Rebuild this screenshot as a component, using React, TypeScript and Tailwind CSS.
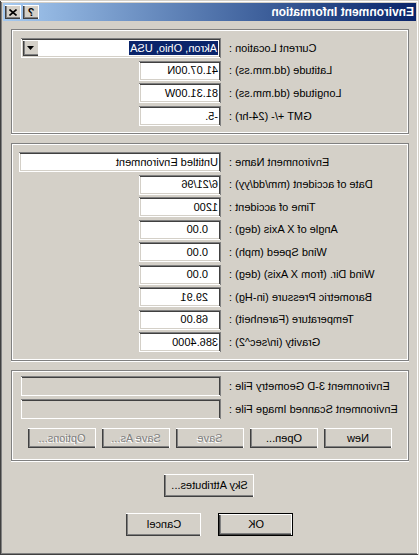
import React from 'react';

const sunken =
  'shadow-[inset_1px_1px_0_#808080,inset_-1px_-1px_0_#ffffff,inset_2px_2px_0_#404040,inset_-2px_-2px_0_#d4d0c8]';
const raised =
  'shadow-[inset_1px_1px_0_#ffffff,inset_-1px_-1px_0_#404040,inset_-2px_-2px_0_#808080]';
const group =
  'w-[398px] ml-[7px] border border-[#808080] shadow-[inset_0_0_0_1px_#ffffff,0_1px_0_#ffffff]';

type FieldProps = { value?: string; wide?: boolean; disabled?: boolean; indent?: boolean };

const Field: React.FC<FieldProps> = ({ value = '', wide = false, disabled = false, indent = false }) => (
  <div
    className={`h-[20px] flex items-center ${wide ? 'w-[200px]' : 'w-[82px]'} ${
      disabled ? 'bg-[#d4d0c8]' : 'bg-white'
    } ${sunken} ${indent ? 'pl-[13px]' : 'pl-[3px]'} whitespace-nowrap`}
  >
    {value}
  </div>
);

const Row: React.FC<{ label: string; children: React.ReactNode }> = ({ label, children }) => (
  <div className="flex items-center h-[20px]">
    <div className="w-[179px] text-right whitespace-nowrap">{label}</div>
    <div className="ml-[8px]">{children}</div>
  </div>
);

type BtnProps = { label: string; w: string; h?: string; disabled?: boolean; def?: boolean };

const Btn: React.FC<BtnProps> = ({ label, w, h = 'h-[20px]', disabled = false, def = false }) => (
  <div className={`${w} ${h} ${def ? 'border border-black' : ''}`}>
    <div
      className={`w-full h-full flex items-center justify-center bg-[#d4d0c8] ${raised} ${
        disabled ? 'text-[#808080] [text-shadow:1px_1px_0_#ffffff]' : 'text-black'
      }`}
    >
      {label}
    </div>
  </div>
);

export default function App() {
  return (
    <div className="w-[419px] h-[555px] -scale-x-100 bg-[#d4d0c8] text-black text-[11px] font-['Liberation_Sans',Arial,sans-serif] shadow-[inset_1px_1px_0_#d4d0c8,inset_-1px_-1px_0_#404040,inset_2px_2px_0_#ffffff,inset_-2px_-2px_0_#808080] p-[3px] overflow-hidden">
      {/* title bar */}
      <div className="h-[18px] flex items-center bg-linear-to-r from-[#0a246a] to-[#a6caf0] pl-[2px] pr-[2px]">
        <span className="text-white font-bold text-[12px] whitespace-nowrap">Environment Information</span>
        <div className="ml-auto flex gap-[2px]">
          <div className={`w-[16px] h-[14px] bg-[#d4d0c8] ${raised} flex items-center justify-center font-bold text-[11px] leading-none`}>
            ?
          </div>
          <div className={`w-[16px] h-[14px] bg-[#d4d0c8] ${raised} flex items-center justify-center`}>
            <svg width="8" height="7" viewBox="0 0 8 7">
              <path d="M0.5 0.5 L7.5 6.5 M7.5 0.5 L0.5 6.5" stroke="#000" strokeWidth="1.6" />
            </svg>
          </div>
        </div>
      </div>

      {/* location */}
      <div className={`${group} mt-[8px] h-[105px] pt-[8px] flex flex-col gap-[2.6px]`}>
        <Row label="Current Location :">
          <div className={`w-[200px] h-[20px] bg-white ${sunken} flex items-center pl-[3px] pr-[2px]`}>
            <span className="bg-[#0a246a] text-white px-px leading-[14px]">Akron, Ohio, USA</span>
            <div className={`ml-auto w-[16px] h-[16px] bg-[#d4d0c8] ${raised} flex items-center justify-center`}>
              <svg width="7" height="4" viewBox="0 0 7 4">
                <path d="M0 0 H7 L3.5 4 Z" fill="#000" />
              </svg>
            </div>
          </div>
        </Row>
        <Row label="Latitude (dd.mm.ss) :">
          <Field value="41.07.00N" />
        </Row>
        <Row label="Longitude (dd.mm.ss) :">
          <Field value="81.31.00W" />
        </Row>
        <Row label="GMT +/- (24-hr) :">
          <Field value="-5." />
        </Row>
      </div>

      {/* environment */}
      <div className={`${group} mt-[9px] h-[218px] pt-[8px] flex flex-col gap-[2.5px]`}>
        <Row label="Environment Name :">
          <div className={`w-[202px] h-[20px] bg-white ${sunken} flex items-center pl-[3px]`}>Untitled Environment</div>
        </Row>
        <Row label="Date of accident (mm/dd/yy) :">
          <Field value="6/21/96" />
        </Row>
        <Row label="Time of accident :">
          <Field value="1200" />
        </Row>
        <Row label="Angle of X Axis (deg) :">
          <Field value="0.00" indent />
        </Row>
        <Row label="Wind Speed (mph) :">
          <Field value="0.00" indent />
        </Row>
        <Row label="Wind Dir. (from X Axis) (deg) :">
          <Field value="0.00" indent />
        </Row>
        <Row label="Barometric Pressure (in-Hg) :">
          <Field value="29.91" indent />
        </Row>
        <Row label="Temperature (Farenheit) :">
          <Field value="68.00" indent />
        </Row>
        <Row label="Gravity (in/sec^2) :">
          <Field value="386.4000" />
        </Row>
      </div>

      {/* files */}
      <div className={`${group} mt-[9px] h-[91px] pt-[5px]`}>
        <div className="flex flex-col gap-[3px]">
          <Row label="Environment 3-D Geometry File :">
            <Field wide disabled />
          </Row>
          <Row label="Environment Scanned Image File :">
            <Field wide disabled />
          </Row>
        </div>
        <div className="flex gap-[6px] pl-[16px] mt-[9px]">
          <Btn label="New" w="w-[68px]" />
          <Btn label="Open..." w="w-[68px]" />
          <Btn label="Save" w="w-[68px]" disabled />
          <Btn label="Save As..." w="w-[68px]" disabled />
          <Btn label="Options..." w="w-[68px]" disabled />
        </div>
      </div>

      <div className="flex justify-center mt-[13px]">
        <Btn label="Sky Attributes..." w="w-[90px]" h="h-[23px]" />
      </div>

      <div className="flex justify-center gap-[17px] mt-[16px] pr-[1px]">
        <Btn label="OK" w="w-[75px]" h="h-[23px]" def />
        <Btn label="Cancel" w="w-[75px]" h="h-[23px]" />
      </div>
    </div>
  );
}
